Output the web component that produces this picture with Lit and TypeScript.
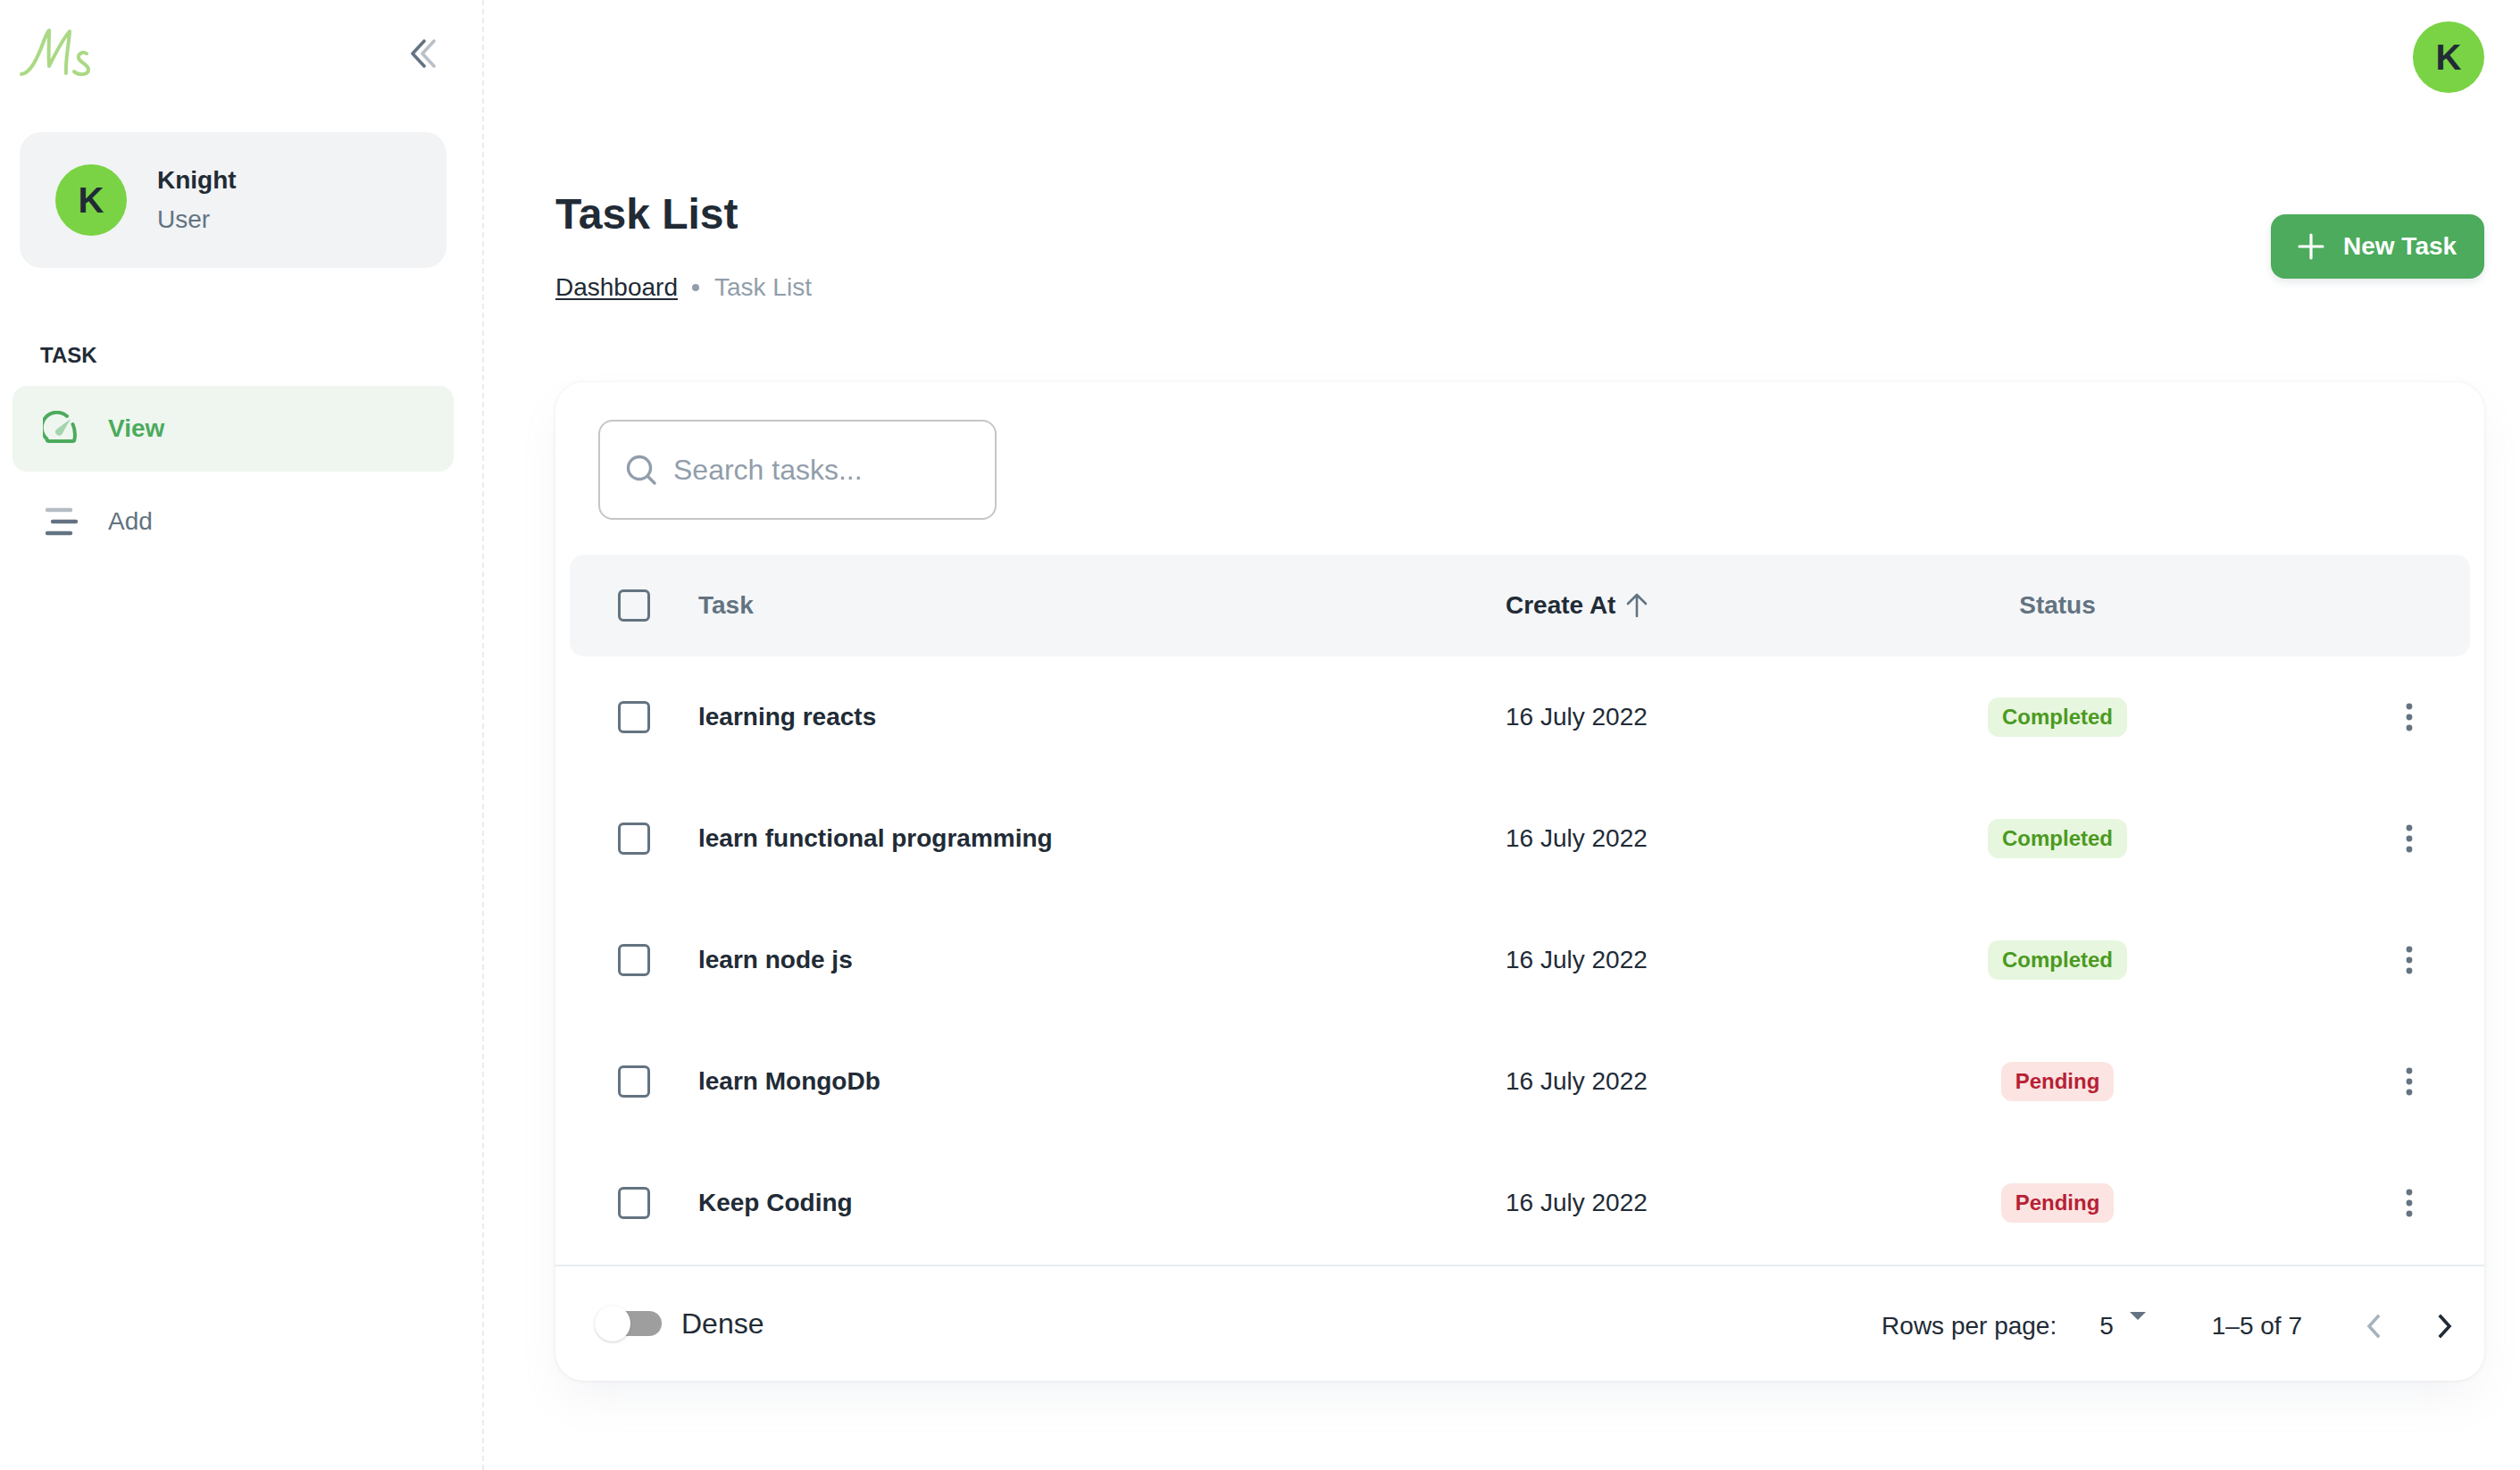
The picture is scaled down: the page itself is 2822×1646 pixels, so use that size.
import { LitElement, html, css, svg } from 'lit';
import { customElement } from 'lit/decorators.js';

interface Task {
  name: string;
  date: string;
  status: 'Completed' | 'Pending';
}

const TASKS: Task[] = [
  { name: 'learning reacts', date: '16 July 2022', status: 'Completed' },
  { name: 'learn functional programming', date: '16 July 2022', status: 'Completed' },
  { name: 'learn node js', date: '16 July 2022', status: 'Completed' },
  { name: 'learn MongoDb', date: '16 July 2022', status: 'Pending' },
  { name: 'Keep Coding', date: '16 July 2022', status: 'Pending' },
];

const logo = svg`<svg class="logo" viewBox="0 0 84 60" width="84" height="60" fill="none" stroke="#aad985" stroke-linecap="round" stroke-linejoin="round">
  <path stroke-width="4" d="M2 53C12 52 19 36 24 24C27 16 30 7 33 4C33 18 32 32 33 44C39 32 48 14 56 5C55 20 51 38 52 52"/>
  <path stroke-width="4" d="M75 30C71 27 65 30 66 35C67 40 77 42 77 48C77 54 66 55 61 50"/>
</svg>`;

const collapseIcon = svg`<svg viewBox="0 0 32 32" width="32" height="32" fill="none" stroke-width="3.6" stroke-linecap="round" stroke-linejoin="round">
  <path stroke="#b9c0c8" d="M28 2L15 16L28 30"/>
  <path stroke="#637381" d="M17 2L4 16L17 30"/>
</svg>`;

const gaugeIcon = svg`<svg viewBox="0 0 40 40" width="40" height="40" fill="none">
  <path stroke="#4cab5c" stroke-width="4" stroke-linejoin="round" stroke-linecap="round" d="M27 6A17 17 0 0 0 4.5 31.5Q4.5 34 7 34H33Q35.5 34 35.5 31.5Q37 23 33.5 15"/>
  <path fill="#4cab5c" opacity=".45" d="M31 9L21.5 26A3.6 3.6 0 0 1 15 21Z"/>
</svg>`;

const barsIcon = svg`<svg viewBox="0 0 40 40" width="40" height="40" stroke-width="4.4" stroke-linecap="round" fill="none">
  <path stroke="#b5bcc4" d="M5 7H31"/>
  <path stroke="#637381" d="M11 20H37"/>
  <path stroke="#637381" d="M5 33H31"/>
</svg>`;

const searchIcon = svg`<svg viewBox="0 0 40 40" width="40" height="40" fill="none" stroke="#919eab" stroke-width="3.4" stroke-linecap="round">
  <circle cx="18" cy="18" r="12.5"/><path d="M27.5 27.5L35 35"/>
</svg>`;

const plusIcon = svg`<svg viewBox="0 0 30 30" width="30" height="30" fill="none" stroke="#fff" stroke-width="3.2" stroke-linecap="round">
  <path d="M15 2V28M2 15H28"/>
</svg>`;

const arrowUp = svg`<svg viewBox="0 0 28 28" width="28" height="28" fill="none" stroke="#637381" stroke-width="2.6" stroke-linecap="round" stroke-linejoin="round">
  <path d="M14 26V2M4 12L14 2L24 12"/>
</svg>`;

const kebab = svg`<svg viewBox="0 0 8 32" width="8" height="32" fill="#637381">
  <circle cx="4" cy="4" r="3.4"/><circle cx="4" cy="16" r="3.4"/><circle cx="4" cy="28" r="3.4"/>
</svg>`;

const chevron = (d: string, color: string) => svg`<svg viewBox="0 0 20 28" width="20" height="28" fill="none" stroke=${color} stroke-width="3.6" stroke-linecap="square">
  <path d=${d}/>
</svg>`;

@customElement('app-root')
export class AppRoot extends LitElement {
  static styles = css`
    :host {
      display: block;
      width: 2822px;
      height: 1646px;
      overflow: hidden;
      background: #fff;
      color: #212b36;
      font-family: 'Liberation Sans', Arial, sans-serif;
      font-size: 28px;
    }

    .shell {
      display: flex;
      height: 100%;
    }

    /* sidebar */
    .sidebar {
      box-sizing: border-box;
      flex: 0 0 542px;
      border-right: 2px dashed #e9ecef;
      padding: 0 32px 0 14px;
    }

    .brand {
      display: flex;
      align-items: center;
      justify-content: space-between;
      height: 148px;
      padding: 0 18px 28px 8px;
      box-sizing: border-box;
    }

    .user-card {
      display: flex;
      align-items: center;
      gap: 34px;
      height: 152px;
      margin: 0 8px;
      padding-left: 40px;
      border-radius: 24px;
      background: #f1f3f5;
    }

    .avatar {
      display: flex;
      align-items: center;
      justify-content: center;
      flex: none;
      width: 80px;
      height: 80px;
      border-radius: 50%;
      background: #7ad344;
      font-size: 40px;
      font-weight: 700;
    }

    .user-name {
      font-weight: 700;
      line-height: 44px;
    }

    .user-role {
      color: #637381;
      line-height: 44px;
    }

    .nav-title {
      margin: 80px 0 16px 31px;
      font-size: 24px;
      font-weight: 700;
      line-height: 36px;
    }

    .nav-item {
      display: flex;
      align-items: center;
      gap: 33px;
      height: 96px;
      padding-left: 34px;
      margin-bottom: 8px;
      border-radius: 16px;
      color: #637381;
    }

    .nav-item.active {
      background: #eff6f0;
      color: #4cab5c;
      font-weight: 700;
    }

    /* main column */
    .main {
      box-sizing: border-box;
      flex: 1;
      padding: 24px 40px 0 80px;
    }

    .top-bar {
      display: flex;
      justify-content: flex-end;
    }

    .page-head {
      display: flex;
      justify-content: space-between;
      margin: 100px 0 85px;
    }

    h1 {
      margin: 0 0 25px;
      font-size: 48px;
      line-height: 72px;
    }

    .crumbs {
      display: flex;
      align-items: center;
      line-height: 42px;
    }

    .crumbs a {
      color: #212b36;
      text-decoration: underline;
      text-decoration-thickness: 2px;
      text-underline-offset: 3px;
    }

    .crumbs i {
      width: 8px;
      height: 8px;
      margin: 0 17px 0 16px;
      border-radius: 50%;
      background: #919eab;
    }

    .crumbs span {
      color: #919eab;
    }

    .new-task {
      display: flex;
      align-items: center;
      gap: 21px;
      box-sizing: border-box;
      width: 239px;
      height: 72px;
      margin-top: 36px;
      padding-left: 30px;
      border-radius: 16px;
      background: #4cab5c;
      color: #fff;
      font-weight: 700;
      box-shadow: 0 4px 8px rgba(145, 158, 171, 0.24);
    }

    .card {
      height: 1118px;
      box-sizing: border-box;
      padding-top: 42px;
      border-radius: 32px;
      background: #fff;
      box-shadow: 0 0 4px rgba(145, 158, 171, 0.2), 0 24px 48px -8px rgba(145, 158, 171, 0.12);
    }

    .search {
      display: flex;
      align-items: center;
      gap: 16px;
      box-sizing: border-box;
      width: 446px;
      height: 112px;
      margin: 0 0 39px 48px;
      padding-left: 26px;
      border: 2px solid #c4c6c8;
      border-radius: 16px;
      color: #919eab;
      font-size: 32px;
    }

    .table {
      padding: 0 16px;
    }

    .row {
      display: grid;
      grid-template-columns: 144px 904px 374px 488px 1fr;
      align-items: center;
      height: 136px;
    }

    .row.head {
      height: 114px;
      border-radius: 16px;
      background: #f4f6f8;
      color: #637381;
      font-weight: 700;
    }

    .check {
      box-sizing: border-box;
      width: 36px;
      height: 36px;
      margin-left: 54px;
      border: 3.4px solid #637381;
      border-radius: 6px;
    }

    .task-name {
      font-weight: 700;
    }

    .sorted {
      display: flex;
      align-items: center;
      gap: 10px;
      color: #212b36;
    }

    .status {
      text-align: center;
    }

    .badge {
      display: inline-block;
      box-sizing: border-box;
      height: 44px;
      padding: 0 16px;
      border-radius: 12px;
      font-size: 24px;
      font-weight: 700;
      line-height: 44px;
    }

    .badge.completed {
      background: #e7f6de;
      color: #4b9a1f;
    }

    .badge.pending {
      background: #fbe4e1;
      color: #b72136;
    }

    .more {
      display: flex;
      justify-content: flex-end;
      padding-right: 64px;
    }

    .footer {
      display: flex;
      align-items: center;
      justify-content: space-between;
      height: 128px;
      margin-top: 1px;
      border-top: 2px solid #e8ecef;
    }

    .dense {
      display: flex;
      align-items: center;
      gap: 22px;
      padding-left: 51px;
      font-size: 32px;
    }

    .track {
      position: relative;
      width: 68px;
      height: 28px;
      border-radius: 14px;
      background: #9e9e9e;
    }

    .knob {
      position: absolute;
      top: -6px;
      left: -7px;
      width: 40px;
      height: 40px;
      border-radius: 50%;
      background: #fff;
      box-shadow: 0 1px 3px rgba(99, 115, 129, 0.35);
    }

    .pager {
      display: flex;
      align-items: center;
      padding-right: 34px;
      margin-top: 6px;
    }

    .rows-value {
      margin-left: 48px;
    }

    .caret {
      width: 0;
      height: 0;
      margin: -24px 0 0 18px;
      border: 9px solid transparent;
      border-top: 9px solid #637381;
      border-bottom: 0;
    }

    .range {
      margin: 0 70px 0 74px;
    }

    .pager svg + svg {
      margin-left: 60px;
    }
  `;

  renderTask(task: Task) {
    return html`
      <div class="row">
        <div class="check"></div>
        <div class="task-name">${task.name}</div>
        <div>${task.date}</div>
        <div class="status">
          <span class="badge ${task.status.toLowerCase()}">${task.status}</span>
        </div>
        <div class="more">${kebab}</div>
      </div>
    `;
  }

  render() {
    return html`
      <div class="shell">
        <aside class="sidebar">
          <div class="brand">${logo}${collapseIcon}</div>
          <div class="user-card">
            <div class="avatar">K</div>
            <div>
              <div class="user-name">Knight</div>
              <div class="user-role">User</div>
            </div>
          </div>
          <div class="nav-title">TASK</div>
          <div class="nav-item active">${gaugeIcon}<span>View</span></div>
          <div class="nav-item">${barsIcon}<span>Add</span></div>
        </aside>

        <main class="main">
          <div class="top-bar"><div class="avatar">K</div></div>
          <div class="page-head">
            <div>
              <h1>Task List</h1>
              <div class="crumbs"><a>Dashboard</a><i></i><span>Task List</span></div>
            </div>
            <div class="new-task">${plusIcon}<span>New Task</span></div>
          </div>

          <section class="card">
            <div class="search">${searchIcon}<span>Search tasks...</span></div>
            <div class="table">
              <div class="row head">
                <div class="check"></div>
                <div>Task</div>
                <div class="sorted">Create At ${arrowUp}</div>
                <div class="status">Status</div>
                <div></div>
              </div>
              ${TASKS.map((task) => this.renderTask(task))}
            </div>
            <div class="footer">
              <div class="dense">
                <div class="track"><div class="knob"></div></div>
                <span>Dense</span>
              </div>
              <div class="pager">
                <span>Rows per page:</span>
                <span class="rows-value">5</span>
                <div class="caret"></div>
                <span class="range">1–5 of 7</span>
                ${chevron('M15 3L5 14L15 25', '#a9b3bd')}
                ${chevron('M5 3L15 14L5 25', '#212b36')}
              </div>
            </div>
          </section>
        </main>
      </div>
    `;
  }
}
